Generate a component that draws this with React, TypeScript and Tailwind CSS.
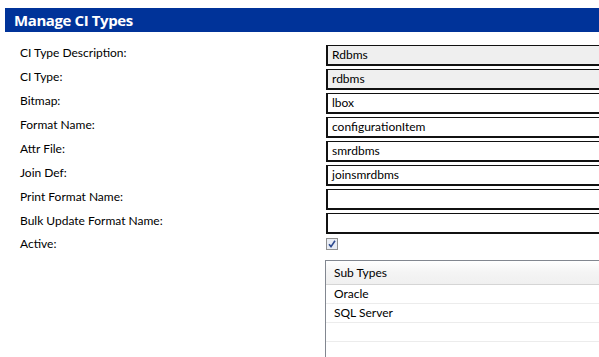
import React from 'react';

const fields: { label: string; value: string; readOnly?: boolean }[] = [
  { label: 'CI Type Description:', value: 'Rdbms', readOnly: true },
  { label: 'CI Type:', value: 'rdbms', readOnly: true },
  { label: 'Bitmap:', value: 'lbox' },
  { label: 'Format Name:', value: 'configurationItem' },
  { label: 'Attr File:', value: 'smrdbms' },
  { label: 'Join Def:', value: 'joinsmrdbms' },
  { label: 'Print Format Name:', value: '' },
  { label: 'Bulk Update Format Name:', value: '' },
];

const subTypes = ['Oracle', 'SQL Server', ''];

export default function App() {
  return (
    <div
      className="w-[599px] h-[357px] overflow-hidden bg-white text-[12px] text-black"
      style={{ fontFamily: '"Segoe UI", Lato, "Open Sans", sans-serif' }}
    >
      {/* Title bar */}
      <div className="mt-[8px] ml-[5px] h-[24px] bg-[#003399] flex items-center pl-[9px]">
        <h1
          className="text-white font-bold text-[15px] leading-none tracking-[-0.4px]"
          style={{ fontFamily: '"Segoe UI", "Open Sans", sans-serif' }}
        >
          Manage CI Types
        </h1>
      </div>

      {/* Form */}
      <div className="mt-[13px] flex flex-col">
        {fields.map((f) => (
          <div key={f.label} className="flex h-[24px]">
            <div className="w-[326px] pl-[20px] leading-[14px] pt-[1px]">{f.label}</div>
            <div
              className={`flex-1 h-[21px] border-t border-l-2 border-b-2 border-[#111] pl-[4px] flex items-center leading-none ${
                f.readOnly ? 'bg-[#efefef]' : 'bg-white'
              }`}
            >
              {f.value}
            </div>
          </div>
        ))}
        <div className="flex items-center h-[14px]">
          <div className="w-[326px] pl-[20px] leading-none">Active:</div>
          <div className="w-[12px] h-[12px] border border-[#8f8f8f] bg-[#e8ecf4] flex items-center justify-center">
            <svg width="10" height="10" viewBox="0 0 10 10">
              <path d="M2 5.2 L4 7.6 L8 1.8" fill="none" stroke="#2e4a8f" strokeWidth="1.6" />
            </svg>
          </div>
        </div>
      </div>

      {/* Sub types grid */}
      <div className="mt-[9px] ml-[325px] border-l border-t border-[#828790] h-[120px]">
        <div className="h-[24px] flex items-center pl-[8px] bg-gradient-to-b from-white via-[#f4f4f4] to-[#f0f0f0] border-b border-[#d5d5d5]">
          Sub Types
        </div>
        {subTypes.map((s, i) => (
          <div key={i} className="h-[19px] flex items-center pl-[8px] border-b border-[#ececec]">
            {s}
          </div>
        ))}
      </div>
    </div>
  );
}
